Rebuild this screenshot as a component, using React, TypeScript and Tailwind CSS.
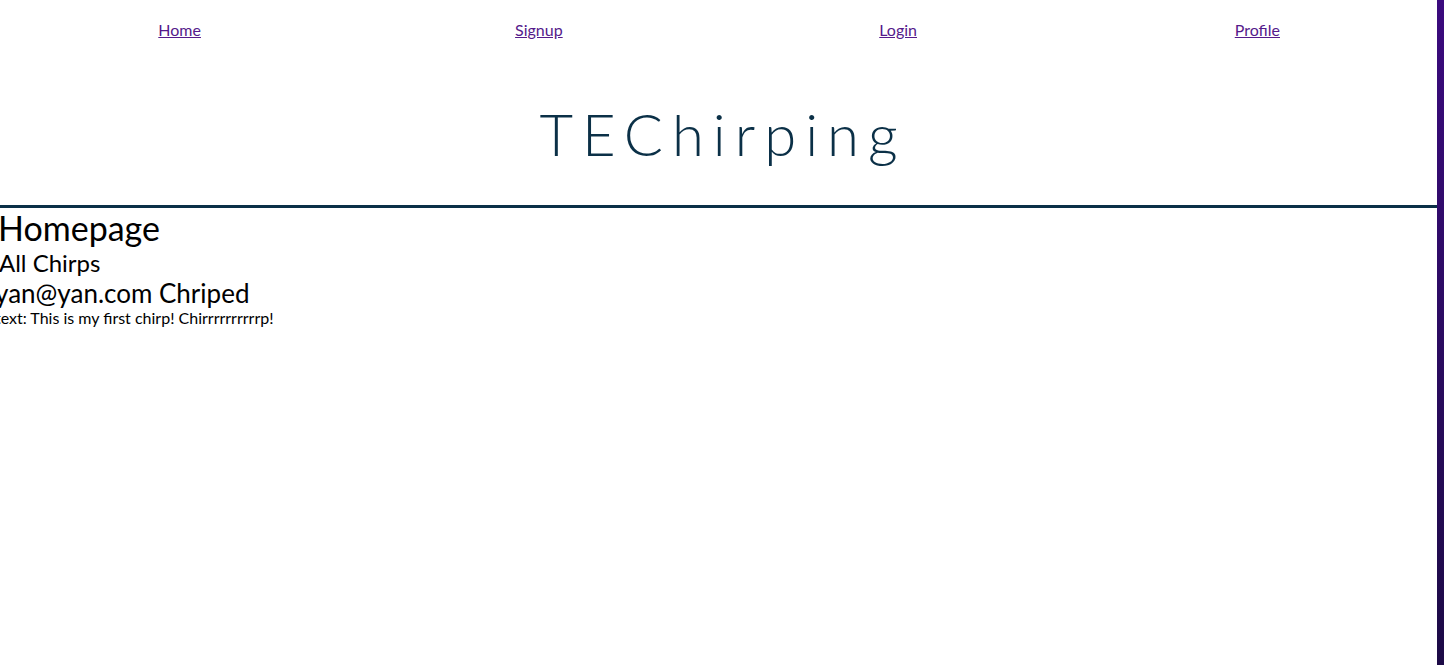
import React from 'react';

const links = ['Home', 'Signup', 'Login', 'Profile'];

export default function App() {
  return (
    <div className="flex min-h-[665px] w-full" style={{ fontFamily: 'Lato, "Noto Sans", sans-serif' }}>
      <div className="w-[1437px] bg-white text-black">
        <nav className="grid grid-cols-4 pt-[19px] text-[16px] leading-[22px]">
          {links.map((l) => (
            <div key={l} className="text-center">
              <a href="#" className="text-[#551a8b] underline">{l}</a>
            </div>
          ))}
        </nav>
        <header className="pt-[58px] pb-[36px] text-center">
          <h1 className="text-[58px] leading-[70px] font-light tracking-[9px] pl-[9px] text-[#0b3047]">TEChirping</h1>
        </header>
        <div className="h-[3px] bg-[#0b3047]" />
        <main>
          <h2 className="text-[34px] leading-[40px] -ml-[2px]">Homepage</h2>
          <h3 className="text-[24px] leading-[30px] -ml-[1px]">All Chirps</h3>
          <div className="-ml-[5px]">
            <h4 className="text-[26px] leading-[30px]">yan@yan.com Chriped</h4>
            <p className="text-[16px] leading-[20px]">text: This is my first chirp! Chirrrrrrrrrrp!</p>
          </div>
        </main>
      </div>
      <div className="w-[7px] bg-gradient-to-b from-[#3b0a7e] to-[#1c0a46]" />
    </div>
  );
}
